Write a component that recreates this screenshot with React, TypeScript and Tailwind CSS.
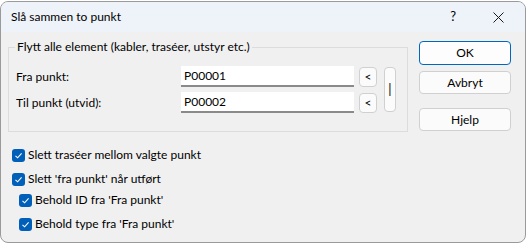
import React from "react";

const font = "font-['Lato','Noto_Sans',sans-serif]";

function Check() {
  return (
    <span className="flex h-[13px] w-[13px] shrink-0 items-center justify-center rounded-[3px] bg-[#005fb8]">
      <svg width="9" height="9" viewBox="0 0 9 9">
        <path d="M1.5 4.8 L3.6 6.8 L7.6 2.4" fill="none" stroke="#ffffff" strokeWidth="1.1" />
      </svg>
    </span>
  );
}

function CheckRow({ label, indent }: { label: string; indent?: boolean }) {
  return (
    <div className={"flex items-center gap-[3px] " + (indent ? "pl-[7px]" : "")}>
      <Check />
      <span className="text-[12px] leading-[16px] text-black">{label}</span>
    </div>
  );
}

function SmallBtn({ children, className }: { children: React.ReactNode; className?: string }) {
  return (
    <div
      className={
        "flex items-center justify-center rounded-[4px] border border-[#d0d0d0] bg-[#fbfbfb] text-[12px] text-black " +
        (className || "")
      }
    >
      {children}
    </div>
  );
}

function Input({ value }: { value: string }) {
  return (
    <div className="flex h-[21px] w-[173px] items-center border-b-[2px] border-[#8a8a8a] bg-white pl-[3px] text-[12px] text-black">
      {value}
    </div>
  );
}

export default function App() {
  return (
    <div className={"h-[246px] w-[527px] overflow-hidden bg-white pt-[1px] " + font}>
      <div className="flex h-[242px] w-[526px] flex-col overflow-hidden rounded-[8px] border border-[#9a9a9a] bg-[#f0f0f0]">
        {/* Title bar */}
        <div className="flex h-[30px] shrink-0 items-center bg-[#eef2f9] pl-[10px] text-[12px] text-black">
          <span className="flex-1">Slå sammen to punkt</span>
          <span className="mr-[37px] text-[13px]">?</span>
          <svg className="mr-[21px]" width="11" height="11" viewBox="0 0 11 11">
            <path d="M0.5 0.5 L10.5 10.5 M10.5 0.5 L0.5 10.5" stroke="#1a1a1a" strokeWidth="1" />
          </svg>
        </div>

        {/* Body */}
        <div className="flex flex-1 flex-col">
          <div className="flex">
            <fieldset className="ml-[7px] mt-[7px] h-[93px] w-[400px] border border-[#dcdcdc] pl-[7px] pt-[11px]">
              <legend className="ml-[-1px] px-[2px] text-[12px] leading-[16px] text-black">
                Flytt alle element (kabler, traséer, utstyr etc.)
              </legend>
              <div className="flex items-start">
                <div className="flex flex-col gap-[5px]">
                  <div className="flex items-center">
                    <span className="w-[165px] text-[12px] text-black">Fra punkt:</span>
                    <Input value="P00001" />
                    <SmallBtn className="ml-[5px] h-[20px] w-[18px]">&lt;</SmallBtn>
                  </div>
                  <div className="flex items-center">
                    <span className="w-[165px] text-[12px] text-black">Til punkt (utvid):</span>
                    <Input value="P00002" />
                    <SmallBtn className="ml-[5px] h-[20px] w-[18px]">&lt;</SmallBtn>
                  </div>
                </div>
                <SmallBtn className="ml-[7px] mt-[1px] h-[45px] w-[12px] text-[13px]">|</SmallBtn>
              </div>
            </fieldset>
            <div className="ml-[11px] mt-[9px] flex flex-col">
              <div className="flex h-[24px] w-[92px] items-center justify-center rounded-[4px] border-[1.5px] border-[#0067c0] bg-[#fdfdfd] text-[12px] text-black">
                OK
              </div>
              <SmallBtn className="mt-[6px] h-[23px] w-[92px]">Avbryt</SmallBtn>
              <SmallBtn className="mt-[14px] h-[23px] w-[92px]">Hjelp</SmallBtn>
            </div>
          </div>

          <div className="ml-[11px] mt-[15px] flex flex-col">
            <CheckRow label="Slett traséer mellom valgte punkt" />
            <div className="mt-[8px]">
              <CheckRow label="Slett 'fra punkt' når utført" />
            </div>
            <div className="mt-[5px]">
              <CheckRow indent label="Behold ID fra 'Fra punkt'" />
            </div>
            <div className="mt-[8px]">
              <CheckRow indent label="Behold type fra 'Fra punkt'" />
            </div>
          </div>
        </div>
      </div>
    </div>
  );
}
